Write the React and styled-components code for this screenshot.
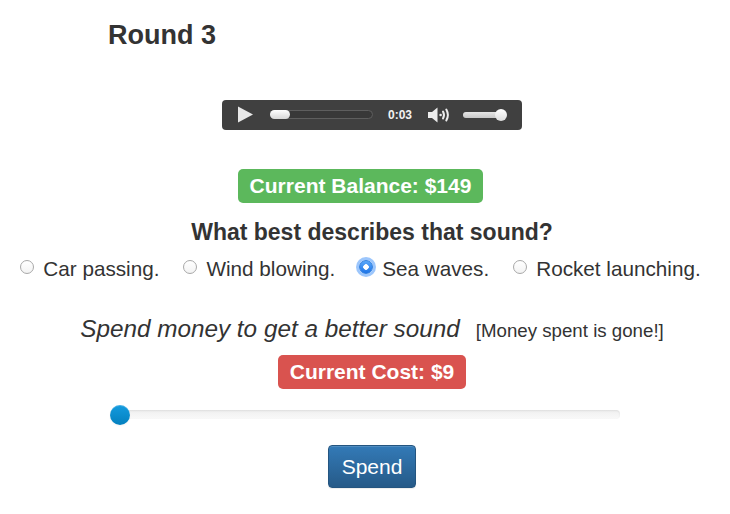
import React from "react";
import styled, { createGlobalStyle } from "styled-components";

const Global = createGlobalStyle`
  body {
    margin: 0;
    background: #fff;
    font-family: "Liberation Sans", Arial, sans-serif;
    color: #333;
  }
`;

const Page = styled.div`
  width: 730px;
  height: 514px;
  overflow: hidden;
`;

const Title = styled.h3`
  margin: 21px 0 0 108px;
  font-size: 27px;
  line-height: 1.1;
  font-weight: bold;
`;

const Column = styled.div`
  display: flex;
  flex-direction: column;
  align-items: center;
  padding-left: 14px;
`;

const Player = styled.div`
  margin-top: 49px;
  width: 300px;
  height: 30px;
  box-sizing: border-box;
  background: #404040;
  border-radius: 4px;
  display: flex;
  align-items: center;
  padding-left: 15px;
`;

const Track = styled.div`
  position: relative;
  width: ${(p) => p.$w}px;
  height: ${(p) => p.$h}px;
  box-sizing: border-box;
  border-radius: ${(p) => p.$h / 2}px;
  background: ${(p) => p.$bg};
  border: 1px solid ${(p) => p.$border};
  margin-left: ${(p) => p.$ml}px;
`;

const Pill = styled.div`
  position: absolute;
  left: -1px;
  top: -1px;
  width: 20px;
  height: 9px;
  border-radius: 5px;
  background: linear-gradient(#ffffff, #d8d8d8);
`;

const VolFill = styled.div`
  position: absolute;
  left: -1px;
  top: -1px;
  bottom: -1px;
  right: 6px;
  border-radius: 4px;
  background: linear-gradient(#e6e6e6, #c8c8c8);
`;

const VolKnob = styled.div`
  position: absolute;
  right: -2px;
  top: -4px;
  width: 12px;
  height: 12px;
  border-radius: 50%;
  background: linear-gradient(#ffffff, #dcdcdc);
`;

const Time = styled.span`
  margin-left: 15px;
  color: #f2f2f2;
  font-size: 12px;
  font-weight: bold;
`;

const Label = styled.span`
  display: inline-block;
  margin-top: ${(p) => p.$mt}px;
  margin-right: ${(p) => p.$mr || 0}px;
  padding: 6px 12px 7px;
  font-size: 21px;
  line-height: 1;
  font-weight: bold;
  color: #fff;
  border-radius: 5px;
  background: ${(p) => (p.$kind === "success" ? "#5cb85c" : "#d9534f")};
`;

const Question = styled.div`
  margin-top: 16px;
  font-size: 23px;
  line-height: 26px;
  font-weight: bold;
`;

const Options = styled.div`
  margin-top: 10px;
  margin-right: 23px;
  display: flex;
  gap: 24px;
  font-size: 20.7px;
  line-height: 28px;
`;

const Option = styled.label`
  display: flex;
  align-items: center;
  gap: 9px;
`;

const Radio = styled.input.attrs({ type: "radio" })`
  appearance: none;
  margin: 0 0 3px;
  width: 14px;
  height: 14px;
  border-radius: 50%;
  box-sizing: border-box;
  border: 1px solid #a8a8a8;
  background: linear-gradient(#fff, #f3f3f3);
  &:checked {
    border: 1px solid #2f7fe0;
    background: radial-gradient(circle, #fff 0 2.5px, transparent 3px),
      linear-gradient(#5aa8fa, #1d74e8);
    box-shadow: 0 0 0 3px rgba(90, 160, 250, 0.6);
  }
`;

const SpendLine = styled.div`
  margin-top: 31px;
  display: flex;
  align-items: baseline;
  gap: 16px;
  line-height: 29px;
`;

const Italic = styled.em`
  font-size: 24.3px;
`;

const Note = styled.span`
  font-size: 18.7px;
`;

const Slider = styled.div`
  position: relative;
  margin-top: 16px;
  margin-right: 14px;
  width: 510px;
  height: 20px;
  display: flex;
  align-items: center;
`;

const SliderTrack = styled.div`
  width: 100%;
  height: 9px;
  border-radius: 4px;
  background: linear-gradient(#f0f0f0, #f9f9f9);
  box-shadow: inset 0 1px 2px rgba(0, 0, 0, 0.08);
`;

const SliderKnob = styled.div`
  position: absolute;
  left: 0;
  top: 0;
  width: 20px;
  height: 20px;
  border-radius: 50%;
  background: linear-gradient(#149bdf, #0480be);
  box-shadow: inset 0 1px 0 rgba(255, 255, 255, 0.2), 0 1px 2px rgba(0, 0, 0, 0.05);
`;

const SpendButton = styled.button`
  margin-top: 20px;
  padding: 10px 13px;
  font-family: inherit;
  font-size: 21px;
  line-height: 21px;
  color: #fff;
  border: 1px solid #245580;
  border-radius: 4px;
  background: linear-gradient(#337ab7, #265a88);
  box-shadow: inset 0 1px 0 rgba(255, 255, 255, 0.15), 0 1px 1px rgba(0, 0, 0, 0.075);
`;

const PlayIcon = () => (
  <svg width="17" height="17" viewBox="0 0 17 17">
    <path d="M1 0.5 L16 8.5 L1 16.5 Z" fill="#e8e8e8" />
  </svg>
);

const SpeakerIcon = () => (
  <svg width="23" height="16" viewBox="0 0 23 16" style={{ marginLeft: 16 }}>
    <path d="M0 5 H4 L9.5 0.5 V15.5 L4 11 H0 Z" fill="#ececec" />
    <circle cx="12.6" cy="8" r="1.3" fill="#ececec" />
    <path d="M15 4.5 Q17 8 15 11.5" stroke="#ececec" strokeWidth="2" fill="none" strokeLinecap="round" />
    <path d="M18.3 2.5 Q21.5 8 18.3 13.5" stroke="#ececec" strokeWidth="2" fill="none" strokeLinecap="round" />
  </svg>
);

const answers = ["Car passing.", "Wind blowing.", "Sea waves.", "Rocket launching."];

export default function App() {
  return (
    <Page>
      <Global />
      <Title>Round 3</Title>
      <Column>
        <Player>
          <PlayIcon />
          <Track $w={103} $h={9} $bg="#383838" $border="#5e5e5e" $ml={16}>
            <Pill />
          </Track>
          <Time>0:03</Time>
          <SpeakerIcon />
          <Track $w={43} $h={6} $bg="#555" $border="#555" $ml={12}>
            <VolFill />
            <VolKnob />
          </Track>
        </Player>
        <Label $kind="success" $mt={39} $mr={23}>
          Current Balance: $149
        </Label>
        <Question>What best describes that sound?</Question>
        <Options>
          {answers.map((a) => (
            <Option key={a}>
              <Radio name="answer" defaultChecked={a === "Sea waves."} />
              {a}
            </Option>
          ))}
        </Options>
        <SpendLine>
          <Italic>Spend money to get a better sound</Italic>
          <Note>[Money spent is gone!]</Note>
        </SpendLine>
        <Label $kind="danger" $mt={10}>
          Current Cost: $9
        </Label>
        <Slider>
          <SliderTrack />
          <SliderKnob />
        </Slider>
        <SpendButton>Spend</SpendButton>
      </Column>
    </Page>
  );
}
